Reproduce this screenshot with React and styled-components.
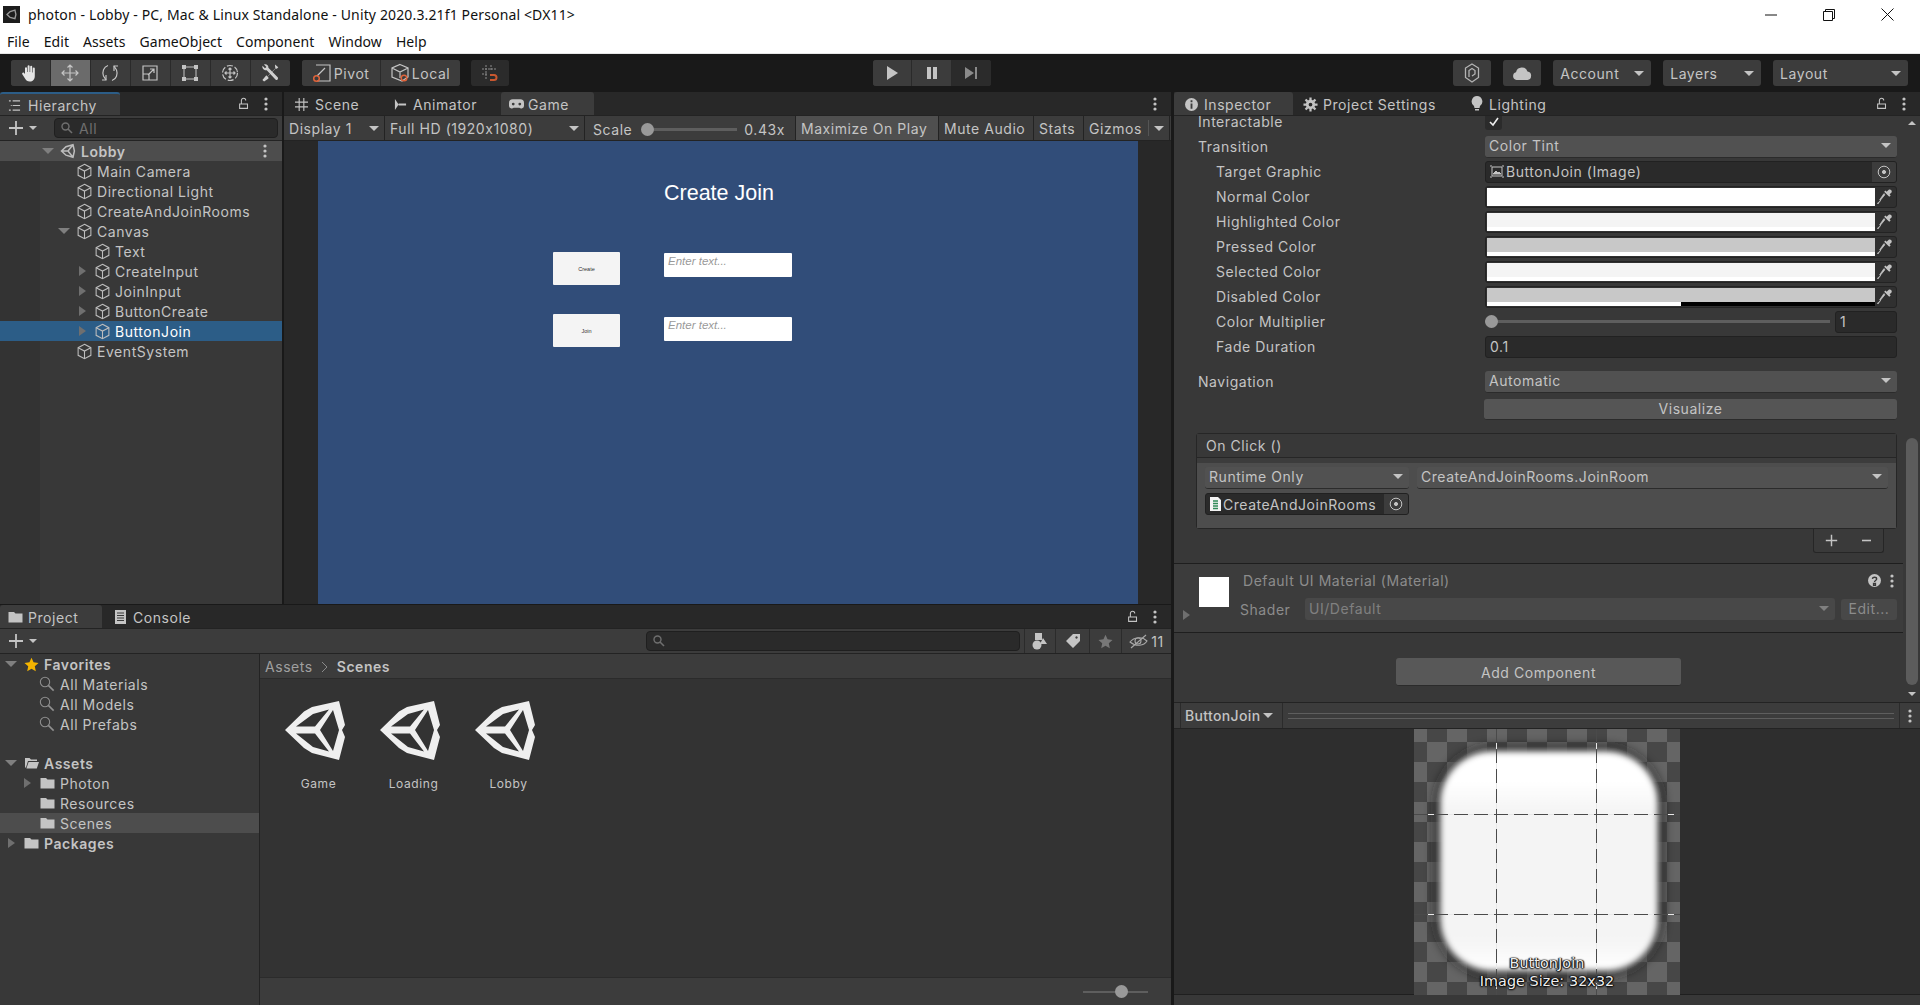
import React from 'react';
import styled, { createGlobalStyle } from 'styled-components';

const GlobalStyle = createGlobalStyle`
  html, body { margin: 0; padding: 0; background: #191919; }
  * { box-sizing: border-box; }
  #root { width: 1920px; height: 1005px; overflow: hidden; }
`;

const Page = styled.div`
  width: 1920px;
  height: 1005px;
  display: flex;
  flex-direction: column;
  overflow: hidden;
  background: #191919;
  color: #c4c4c4;
  font-family: Inter, "Noto Sans", sans-serif;
  font-size: 14px;
  letter-spacing: 0.55px;
`;

const WindowHeader = styled.header`
  height: 54px;
  flex: none;
  background: #fff;
  color: #111;
  font-family: "Noto Sans", sans-serif;
  font-size: 14px;
  letter-spacing: 0.14px;
  border-bottom: 1px solid #e6e6e6;
`;

const TitleRow = styled.div`
  height: 29px;
  display: flex;
  align-items: center;
  padding-left: 3px;
`;

const AppIcon = styled.div`
  width: 17px;
  height: 17px;
  margin-right: 8px;
  background: #1c1c1c;
  display: flex;
  align-items: center;
  justify-content: center;
`;

const WindowButtons = styled.div`
  margin-left: auto;
  display: flex;
  align-items: center;
  gap: 46px;
  padding-right: 26px;
`;

const MenuRow = styled.nav`
  height: 24px;
  display: flex;
  align-items: center;
  gap: 14px;
  padding-left: 7px;
  font-size: 14px;
  letter-spacing: 0.07px;
`;

const Toolbar = styled.div`
  height: 38px;
  flex: none;
  display: flex;
  align-items: flex-start;
  padding: 6px 12px 0 11px;
  background: #191919;
`;

const ToolGroup = styled.div`
  display: flex;
  height: 26px;
  margin-left: ${p => p.$gap || 0}px;
  border-radius: 3px;
  overflow: hidden;
  background: #3c3c3c;
  gap: 1px;
`;

const ToolButton = styled.div`
  width: ${p => p.$w || 39}px;
  height: 26px;
  display: flex;
  align-items: center;
  justify-content: center;
  gap: 2px;
  color: ${p => (p.$dim ? '#8a8a8a' : '#c4c4c4')};
  background: ${p => (p.$active ? '#6b6b6b' : p.$dim ? '#2b2b2b' : '#3c3c3c')};
  box-shadow: 1px 0 0 #2a2a2a;
`;

const ToolDrop = styled.div`
  width: ${p => p.$w}px;
  height: 26px;
  margin-left: ${p => p.$gap}px;
  display: flex;
  align-items: center;
  justify-content: space-between;
  padding: 0 7px;
  border-radius: 3px;
  background: #3c3c3c;
  color: #c4c4c4;
`;

const Workspace = styled.div`
  flex: 1;
  min-height: 0;
  display: flex;
`;

const LeftColumn = styled.div`
  width: 1171px;
  flex: none;
  display: flex;
  flex-direction: column;
  gap: 1px;
`;

const TopRow = styled.div`
  height: 512px;
  flex: none;
  display: flex;
  gap: 2px;
`;

const Panel = styled.section`
  flex: ${p => (p.$w ? 'none' : 1)};
  width: ${p => (p.$w ? `${p.$w}px` : 'auto')};
  min-width: 0;
  min-height: 0;
  display: flex;
  flex-direction: column;
  background: #383838;
`;

const TabStrip = styled.div`
  height: 24px;
  flex: none;
  display: flex;
  align-items: stretch;
  background: #282828;
  border-bottom: 1px solid #232323;
`;

const Tab = styled.div`
  width: ${p => p.$w}px;
  display: flex;
  align-items: center;
  gap: ${p => p.$iconGap || 5}px;
  padding: 1px 0 0 ${p => p.$pad || 8}px;
  background: ${p => (p.$active ? '#3c3c3c' : 'transparent')};
  border-top: ${p => (p.$focus ? '2px solid #2c5d87' : 'none')};
  border-radius: 3px 3px 0 0;
`;

const TabTools = styled.div`
  margin-left: auto;
  display: flex;
  align-items: center;
  gap: 13px;
  padding-right: 14px;
`;

const SubBar = styled.div`
  height: 25px;
  flex: none;
  display: flex;
  align-items: center;
  background: #3c3c3c;
  border-bottom: 1px solid #232323;
`;

const AddButton = styled.div`
  width: 52px;
  flex: none;
  display: flex;
  align-items: center;
  gap: 5px;
  padding-left: 8px;
`;

const SearchBox = styled.div`
  height: 20px;
  display: flex;
  align-items: center;
  gap: 6px;
  padding-left: 6px;
  width: ${p => p.$w}px;
  margin-left: ${p => p.$left || 0}px;
  border: 1px solid #1f1f1f;
  border-radius: 4px;
  background: #2a2a2a;
  color: #6f6f6f;
`;

const TreeList = styled.div`
  flex: 1;
  min-height: 0;
  background: ${p => (p.$plain ? '#383838' : 'linear-gradient(90deg, #333 40px, #383838 40px)')};
`;

const TreeRow = styled.div`
  height: 20px;
  display: flex;
  align-items: center;
  padding-left: ${p => p.$pad + 18 * p.$depth}px;
  margin-top: ${p => p.$top || 0}px;
  background: ${p => (p.$selected ? '#2c5d87' : p.$hl ? '#4d4d4d' : 'transparent')};
  color: ${p => (p.$selected ? '#fff' : '#c4c4c4')};
  font-weight: ${p => (p.$bold ? 600 : 400)};
`;

const ArrowSlot = styled.span`
  width: 18px;
  flex: none;
  display: flex;
  justify-content: center;
`;

const IconSlot = styled.span`
  width: 18px;
  flex: none;
  display: flex;
  justify-content: center;
  margin-left: 2px;
  margin-right: 4px;
  color: ${p => p.$color || '#bdbdbd'};
`;

const RowMenu = styled.span`
  margin-left: auto;
  padding-right: 15px;
  display: flex;
`;

const Caret = styled.span`
  display: inline-block;
  flex: none;
  width: 0;
  height: 0;
  ${p => {
    const size = p.$size || 5;
    const color = p.$color || '#c4c4c4';
    if (p.$right) {
      return `border-top: 5px solid transparent; border-bottom: 5px solid transparent; border-left: 7px solid ${p.$color || '#6f6f6f'};`;
    }
    const side = `border-left: ${size}px solid transparent; border-right: ${size}px solid transparent;`;
    return p.$up ? `${side} border-bottom: ${size}px solid ${color};` : `${side} border-top: ${size}px solid ${color};`;
  }}
`;

const GameBar = styled.div`
  display: flex;
  align-items: center;
  justify-content: space-between;
  flex: none;
  width: ${p => p.$w}px;
  height: 100%;
  padding: 0 5px 0 5px;
  border-right: 1px solid #232323;
  background: ${p => (p.$on ? '#4f4f4f' : 'transparent')};
`;

const CaretSplit = styled.span`
  height: 16px;
  display: flex;
  align-items: center;
  padding-left: 5px;
  border-left: 1px solid #555;
`;

const ScaleControl = styled.div`
  width: 211px;
  flex: none;
  height: 100%;
  display: flex;
  align-items: center;
  padding: 2px 0 0 8px;
  border-right: 1px solid #232323;
`;

const SliderTrack = styled.div`
  position: relative;
  height: ${p => p.$h || 3}px;
  width: ${p => p.$w}px;
  margin: 0 ${p => p.$mr || 0}px 0 ${p => p.$ml || 0}px;
  background: #5e5e5e;
  flex: none;
`;

const SliderThumb = styled.span`
  position: absolute;
  left: ${p => p.$x}px;
  top: 50%;
  width: 13px;
  height: 13px;
  margin-top: -6.5px;
  border-radius: 50%;
  background: #999;
`;

const GameView = styled.div`
  flex: 1;
  min-height: 0;
  padding: 0 33px 0 34px;
  background: #282828;
`;

const GameCanvas = styled.div`
  position: relative;
  height: 100%;
  background: #314d79;
  font-family: "Liberation Sans", sans-serif;
  letter-spacing: 0;
`;

const CanvasTitle = styled.div`
  position: absolute;
  left: 346px;
  top: 40px;
  color: #fff;
  font-size: 21.5px;
  line-height: 24px;
`;

const CanvasButton = styled.div`
  position: absolute;
  left: 235px;
  top: ${p => p.$y}px;
  width: 67px;
  height: 33px;
  display: flex;
  align-items: center;
  justify-content: center;
  border-radius: 1px;
  background: #f4f4f4;
  color: #333;
  font-size: 5.5px;
`;

const CanvasInput = styled.div`
  position: absolute;
  left: 346px;
  top: ${p => p.$y}px;
  width: 128px;
  height: 24px;
  padding: 2px 4px;
  border-radius: 1px;
  background: #fff;
  color: #9a9a9a;
  font-size: 11.5px;
  font-style: italic;
`;

const BottomBody = styled.div`
  flex: 1;
  min-height: 0;
  display: flex;
`;

const Sidebar = styled.div`
  width: 260px;
  flex: none;
  border-right: 1px solid #232323;
`;

const Browser = styled.div`
  flex: 1;
  min-width: 0;
  display: flex;
  flex-direction: column;
  background: #333;
`;

const Breadcrumb = styled.div`
  height: 25px;
  flex: none;
  display: flex;
  align-items: center;
  gap: 8px;
  padding: 1px 0 0 5px;
  background: #3c3c3c;
  border-bottom: 1px solid #2b2b2b;
`;

const Crumb = styled.span`
  color: ${p => (p.$on ? '#c4c4c4' : '#a0a0a0')};
  font-weight: ${p => (p.$on ? 600 : 400)};
`;

const AssetGrid = styled.div`
  flex: 1;
  min-height: 0;
  display: flex;
  align-items: flex-start;
  padding: 22px 0 0 7px;
`;

const AssetCard = styled.div`
  width: 95px;
  display: flex;
  flex-direction: column;
  align-items: center;
  gap: 16px;
  color: #c4c4c4;
  font-size: 12px;
  letter-spacing: 0.6px;
`;

const AssetName = styled.span`
  padding-left: 8px;
  line-height: 16px;
`;

const StatusBar = styled.div`
  height: 28px;
  flex: none;
  display: flex;
  align-items: center;
  justify-content: flex-end;
  padding-right: 23px;
  background: #3c3c3c;
  border-top: 1px solid #2b2b2b;
`;

const FilterGroup = styled.div`
  height: 100%;
  display: flex;
  margin-left: 4px;
`;

const FilterButton = styled.div`
  width: ${p => p.$w}px;
  flex: none;
  height: 100%;
  display: flex;
  align-items: center;
  justify-content: center;
  gap: 3px;
  border-left: 1px solid #2b2b2b;
`;

const Inspector = styled.aside`
  width: 746px;
  margin-left: 3px;
  flex: none;
  display: flex;
  flex-direction: column;
  background: #383838;
  border-radius: 3px 3px 0 0;
`;

const InspectorMain = styled.div`
  height: 586px;
  flex: none;
  display: flex;
`;

const InspectorScroll = styled.div`
  flex: 1;
  min-width: 0;
  overflow: hidden;
`;

const CheckRow = styled.div`
  height: 18px;
  display: flex;
  align-items: flex-start;
  line-height: 12px;
  overflow: hidden;
`;

const CheckBox = styled.span`
  width: 17px;
  height: 14px;
  display: flex;
  justify-content: center;
  border-radius: 0 0 3px 3px;
  background: #2b2b2b;
`;

const PropRow = styled.div`
  height: 25px;
  display: flex;
  align-items: center;
  margin-top: ${p => p.$top || 0}px;
`;

const PropLabel = styled.span`
  width: ${p => (p.$sub ? 269 : 287)}px;
  flex: none;
  margin-left: ${p => (p.$sub ? 42 : 24)}px;
`;

const Drop = styled.div`
  height: 22px;
  flex: ${p => (p.$w ? 'none' : 1)};
  width: ${p => (p.$w ? `${p.$w}px` : 'auto')};
  display: flex;
  align-items: center;
  justify-content: space-between;
  padding: 0 6px 2px 4px;
  border-radius: 3px;
  background: ${p => (p.$off ? '#484848' : '#515151')};
  color: ${p => (p.$off ? '#808080' : '#c4c4c4')};
  border-bottom: ${p => (p.$off ? 'none' : '1px solid #2b2b2b')};
`;

const ControlArea = styled.div`
  width: 412px;
  flex: none;
  display: flex;
  align-items: center;
  height: 22px;
  gap: 5px;
`;

const ObjectBox = styled.div`
  flex: ${p => (p.$w ? 'none' : 1)};
  width: ${p => (p.$w ? `${p.$w}px` : 'auto')};
  height: 22px;
  display: flex;
  align-items: center;
  padding-left: 4px;
  gap: 2px;
  border: 1px solid #212121;
  border-radius: 3px;
  background: #2a2a2a;
  overflow: hidden;
  white-space: nowrap;
`;

const ObjectPick = styled.span`
  width: 24px;
  height: 100%;
  margin-left: auto;
  flex: none;
  display: flex;
  align-items: center;
  justify-content: center;
  background: #3c3c3c;
`;

const SwatchFrame = styled.div`
  width: 412px;
  height: 22px;
  display: flex;
  padding: 1px;
  border: 1px solid #232323;
  border-radius: 3px;
  background: #303030;
`;

const Swatch = styled.div`
  width: 388px;
  height: 100%;
  display: flex;
  flex-direction: column;
  background: ${p => p.$color};
`;

const SwatchAlpha = styled.div`
  height: 4px;
  margin-top: auto;
  background: ${p => (p.$half ? 'linear-gradient(90deg, #fff 50%, #000 50%)' : '#fff')};
`;

const SwatchPick = styled.div`
  flex: 1;
  display: flex;
  align-items: center;
  justify-content: center;
  color: #c4c4c4;
`;

const NumberBox = styled.div`
  width: ${p => (p.$w ? `${p.$w}px` : '100%')};
  height: 22px;
  flex: none;
  display: flex;
  align-items: center;
  padding-left: 4px;
  border: 1px solid #212121;
  border-radius: 3px;
  background: #2a2a2a;
`;

const VisualizeButton = styled.div`
  width: 413px;
  height: 21px;
  margin: 5px 0 0 310px;
  display: flex;
  align-items: center;
  justify-content: center;
  padding-bottom: 2px;
  border-radius: 3px;
  background: #555;
  border-bottom: 1px solid #2b2b2b;
`;

const EventBox = styled.div`
  width: 701px;
  margin: 13px 0 0 22px;
  border: 1px solid #262626;
  border-radius: 3px;
`;

const EventHead = styled.div`
  height: 24px;
  display: flex;
  align-items: center;
  padding-left: 9px;
  background: #383838;
  border-bottom: 1px solid #262626;
`;

const EventBody = styled.div`
  height: 70px;
  padding: 9px 8px 0 8px;
  background: linear-gradient(180deg, #3c3c3c 5px, #4d4d4d 5px);
  display: flex;
  flex-direction: column;
  gap: 4px;
`;

const EventRow = styled.div`
  display: flex;
  gap: 8px;
`;

const EventFooter = styled.div`
  width: 71px;
  height: 24px;
  margin-left: 639px;
  display: flex;
  align-items: center;
  justify-content: space-around;
  border: 1px solid #262626;
  border-top: none;
  border-radius: 0 0 3px 3px;
  background: #3a3a3a;
  color: #c4c4c4;
`;

const MaterialSection = styled.div`
  height: 70px;
  margin-top: 10px;
  padding: 0 6px 0 13px;
  position: relative;
  border-top: 1px solid #1e1e1e;
  border-bottom: 1px solid #1e1e1e;
  display: flex;
  background: #3c3c3c;
`;

const MaterialThumb = styled.div`
  width: 30px;
  height: 30px;
  margin: 13px 14px 0 12px;
  flex: none;
  background: #fff;
`;

const MaterialInfo = styled.div`
  flex: 1;
  min-width: 0;
  display: flex;
  flex-direction: column;
  color: #8c8c8c;
`;

const MaterialTitle = styled.div`
  height: 33px;
  display: flex;
  align-items: center;
  padding-right: 3px;
`;

const MaterialIcons = styled.div`
  margin-left: auto;
  display: flex;
  align-items: center;
  gap: 9px;
  color: #c4c4c4;
`;

const ShaderRow = styled.div`
  display: flex;
  align-items: center;
  height: 22px;
  margin: 1px 0 0 -3px;
`;

const ShaderLabel = styled.span`
  width: 65px;
  flex: none;
`;

const EditButton = styled.div`
  width: 56px;
  height: 21px;
  margin-left: 6px;
  flex: none;
  display: flex;
  align-items: center;
  justify-content: center;
  padding-bottom: 2px;
  border-radius: 3px;
  background: #484848;
`;

const FoldArrow = styled.span`
  position: absolute;
  left: 9px;
  bottom: 9px;
`;

const AddComponent = styled.div`
  width: 285px;
  height: 28px;
  margin: 25px 0 0 222px;
  display: flex;
  align-items: center;
  justify-content: center;
  padding-top: 2px;
  border-radius: 3px;
  background: #585858;
  border-bottom: 1px solid #2b2b2b;
`;

const Scrollbar = styled.div`
  width: 17px;
  flex: none;
  display: flex;
  flex-direction: column;
  align-items: center;
  padding: 5px 0 6px;
`;

const ScrollThumb = styled.div`
  width: 12px;
  height: 247px;
  margin-top: auto;
  margin-bottom: 7px;
  border-radius: 6px;
  background: #5c5c5c;
`;

const PreviewHead = styled.div`
  height: 27px;
  flex: none;
  display: flex;
  align-items: center;
  background: #3c3c3c;
  border-top: 1px solid #232323;
  border-bottom: 1px solid #232323;
  padding-left: 6px;
`;

const PreviewPick = styled.div`
  width: 103px;
  height: 100%;
  flex: none;
  display: flex;
  align-items: center;
  gap: 3px;
  padding-left: 4px;
  font-weight: 500;
  letter-spacing: 0.35px;
  border-left: 1px solid #2b2b2b;
  border-right: 1px solid #2b2b2b;
`;

const PreviewGrip = styled.div`
  flex: 1;
  height: 6px;
  margin: 0 5px;
  border-top: 1px solid #5e5e5e;
  border-bottom: 1px solid #5e5e5e;
`;

const PreviewDots = styled.div`
  width: 21px;
  height: 100%;
  flex: none;
  display: flex;
  align-items: center;
  justify-content: center;
  border-left: 1px solid #2b2b2b;
`;

const PreviewArea = styled.div`
  height: 266px;
  flex: none;
  display: flex;
  justify-content: center;
  background: #2e2e2e;
  border-bottom: 1px solid #1f1f1f;
`;

const SpriteFrame = styled.div`
  position: relative;
  width: 266px;
  height: 266px;
`;

const SpriteCaption = styled.div`
  position: absolute;
  left: -10px;
  right: -10px;
  bottom: 5px;
  text-align: center;
  color: #eee;
  font-family: "DejaVu Sans", sans-serif;
  font-size: 14.3px;
  line-height: 18px;
  letter-spacing: 0.1px;
  text-shadow: 0 0 2px #000, 0 1px 2px #000, 1px 0 1px #000, -1px 0 1px #000;
`;

const InspectorRest = styled.div`
  flex: 1;
  background: #383838;
`;

/* ---- icons ---- */

const Ico = ({ s = 16, w, h, vb = '0 0 16 16', children }) => (
  <svg width={w || s} height={h || s} viewBox={vb} fill="none" stroke="currentColor" strokeWidth="1.2">
    {children}
  </svg>
);

const Cube = () => (
  <Ico s={17}>
    <path d="M8 1.2 14 4.4v7.2L8 14.8 2 11.6V4.4z" strokeWidth="1" />
    <path d="M2 4.4 8 7.6l6-3.2M8 7.6v7.2" strokeWidth="1" />
  </Ico>
);

const Dots = () => (
  <svg width="4" height="14" viewBox="0 0 4 14" fill="currentColor">
    <circle cx="2" cy="2" r="1.6" />
    <circle cx="2" cy="7" r="1.6" />
    <circle cx="2" cy="12" r="1.6" />
  </svg>
);

const Lock = () => (
  <Ico s={14}>
    <path d="M3 8h9v5H3zM5 8V4a2.4 2.4 0 0 1 5 0" />
  </Ico>
);

const Plus = ({ s = 16 }) => (
  <Ico s={s}>
    <path d="M8 1v14M1 8h14" strokeWidth="1.8" />
  </Ico>
);

const Lens = ({ s = 12, thin }) => (
  <Ico s={s} vb="0 0 12 12">
    <circle cx="4.5" cy="4.5" r="3.5" strokeWidth={thin ? 0.8 : 1.4} />
    <path d="M7 7l4 4" strokeWidth={thin ? 1.2 : 1.6} />
  </Ico>
);

const Folder = ({ open }) => (
  <svg width="15" height="14" viewBox="0 0 15 14" fill="#c4c4c4">
    {open
      ? <path d="M1 2h4.500l1.500 1.500h6V5H4L2 11.500H1zM4.600 6H15l-2.200 6.500H2.400z" />
      : <path d="M.5 2H6l1.500 1.500h7v9H.5z" />}
  </svg>
);

const Star = ({ color = '#f4b400', s = 15 }) => (
  <svg width={s} height={s} viewBox="0 0 16 16" fill={color}>
    <path d="m8 .8 2.200 4.900 5.300.6-4 3.600 1.100 5.300L8 12.500l-4.600 2.700 1.100-5.300-4-3.600 5.300-.6z" />
  </svg>
);

const UnityGlyph = ({ s = 16 }) => (
  <svg width={s} height={s} viewBox="0 0 16 16" fill="none" stroke="currentColor" strokeWidth="1.5">
    <path d="M1.500 8 6 3.700l7-2 1.400 6.300-1.400 6.200-7-2zM1.500 8H8l5-6.200M8 8l5 6.200" />
  </svg>
);

const UnityLogo = () => (
  <svg width="60" height="59" viewBox="0 0 60 59">
    <path
      fill="#efefef"
      fillRule="evenodd"
      d="M0 29 19 10.500 27 6 54 0l6 24-3 5 3 7-6 23-27-7-8-5zM11 25.500h19L44 8.500 28 13zM11 32.500 28 46l16 4.500-14-18zM35 29 48 50l6-21-6-20z"
    />
  </svg>
);

const Arrows = () => (
  <Ico s={20} vb="0 0 20 20">
    <path d="M10 2v16M2 10h16M7.500 4.500 10 2l2.500 2.500M7.500 15.500 10 18l2.500-2.500M4.500 7.500 2 10l2.500 2.500M15.500 7.500 18 10l-2.500 2.500" />
  </Ico>
);

const Hand = () => (
  <svg width="20" height="20" viewBox="0 0 20 20" fill="#e4e4e4">
    <path d="M5 11V5.200a1 1 0 0 1 2 0V9h.6V3.200a1 1 0 0 1 2 0V9h.6V3.800a1 1 0 0 1 2 0v5.700h.6V5.600a1 1 0 0 1 2 0V13c0 3.500-2 5.500-5 5.500-2.500 0-3.700-1-4.800-3L2.300 11.200c-.6-1.300 1-2.200 1.800-1.200z" />
  </svg>
);

const Rotate = () => (
  <Ico s={20} vb="0 0 20 20">
    <path d="M8 2.500C3.500 4 2 9 3.500 13l2.500 4M12 17.500c4.500-1.500 6-6.500 4.500-10.500L14 3" />
    <path d="M6 12v5H2M14 8V3h4" />
  </Ico>
);

const ScaleIcon = () => (
  <Ico s={18} vb="0 0 18 18">
    <path d="M2 2h14v14H2zM2 10h6v6M7 11l6-6M9 5h4v4" />
  </Ico>
);

const RectIcon = () => (
  <svg width="18" height="18" viewBox="0 0 18 18" fill="#c4c4c4">
    <path d="M3 3h12v12H3z" fill="none" stroke="#c4c4c4" strokeWidth="1" />
    <path d="M1 1h4v4H1zM13 1h4v4h-4zM1 13h4v4H1zM13 13h4v4h-4z" />
  </svg>
);

const TransformIcon = () => (
  <Ico s={20} vb="0 0 20 20">
    <circle cx="10" cy="10" r="7.500" strokeDasharray="6 2" />
    <path d="M10 5v10M5 10h10M8.500 6.500 10 5l1.500 1.500M8.500 13.500 10 15l1.500-1.500M6.500 8.500 5 10l1.500 1.500M13.500 8.500 15 10l-1.500 1.500" />
  </Ico>
);

const ToolsIcon = () => (
  <svg width="20" height="20" viewBox="0 0 20 20" fill="#d0d0d0">
    <path d="M2.500 2.800 5 5.200l1.400-1.300L4 1.500C6.200.6 8.600 2.200 8.400 4.800l9 9.200c.8.800.8 1.700.2 2.400-.7.700-1.700.7-2.400-.1L6.700 7.300c-2.600.3-5-1.900-4.200-4.500z" />
    <path d="m15 1.500 3.300 2.700-1.500 1.600-1.200-.3-8 8.200 1.200 1.200-1 1-3.700 2.600-1.700-1.600 2.900-3.500 1-1.100 1.100 1.200 8-8.200-.3-1.200z" />
  </svg>
);

const PivotIcon = () => (
  <svg width="20" height="20" viewBox="0 0 20 20" fill="none" stroke="#c4c4c4" strokeWidth="1.200">
    <path d="M4 2h14v16H5M5 13 13 5" />
    <circle cx="4.500" cy="15.500" r="2.800" stroke="#e0633a" strokeWidth="1.500" />
  </svg>
);

const LocalIcon = () => (
  <svg width="20" height="20" viewBox="0 0 20 20" fill="none" stroke="#c4c4c4" strokeWidth="1.200">
    <path d="M10 1.500 18 5v9l-6 4-10-4V5zM2 5l8 4 8-4M10 9v6" />
    <circle cx="14" cy="15" r="2.800" stroke="#e0633a" strokeWidth="1.500" />
  </svg>
);

const SnapIcon = () => (
  <svg width="20" height="20" viewBox="0 0 20 20" fill="none" stroke="#8c8c8c" strokeWidth="1">
    <path d="M6 2v14M11 2v6M2 6h14M2 11h6" strokeDasharray="2 1" />
    <path d="M10 12h4a2.500 2.500 0 0 1 0 5h-4" stroke="#c8572f" strokeWidth="2" />
  </svg>
);

const PlayTri = () => (
  <svg width="12" height="14" viewBox="0 0 12 14" fill="#c4c4c4"><path d="M1 0v14l11-7z" /></svg>
);

const PauseBars = () => (
  <svg width="12" height="14" viewBox="0 0 12 14" fill="#c4c4c4"><path d="M1 1h4v12H1zM7 1h4v12H7z" /></svg>
);

const StepIcon = () => (
  <svg width="13" height="14" viewBox="0 0 13 14" fill="#8a8a8a"><path d="M0 1v12l9-6zM10 1h2v12h-2z" /></svg>
);

const CollabIcon = () => (
  <svg width="16" height="20" viewBox="0 0 16 20" fill="none" stroke="#b4b4b4" strokeWidth="1.300">
    <path d="M8 1 14.500 5v9.500L8 19 1.500 14.500V5z" />
    <path d="M5 14V7.500l3-2 3 2V11L8 13" />
  </svg>
);

const CloudIcon = () => (
  <svg width="20" height="15" viewBox="0 0 20 15" fill="#c4c4c4">
    <path d="M4.500 14A4 4 0 0 1 4 6.200 6 6 0 0 1 15.500 5.500 4.300 4.300 0 0 1 15.500 14z" />
  </svg>
);

const ListIcon = () => (
  <Ico s={13} vb="0 0 14 14">
    <path d="M1 2h2M5 2h8M3 7h1M5 7h8M1 12h2M5 12h8" />
  </Ico>
);

const GridIcon = () => (
  <Ico s={13} vb="0 0 14 14">
    <path d="M4.500 0v14M9.500 0v14M0 4.500h14M0 9.500h14" />
  </Ico>
);

const AnimatorIcon = () => (
  <svg width="13" height="13" viewBox="0 0 14 14" fill="#c4c4c4">
    <path d="M1 1l4 6-4 6zM5 6h8v2H5z" />
  </svg>
);

const GamepadIcon = () => (
  <svg width="15" height="11" viewBox="0 0 16 11" fill="#c4c4c4">
    <path d="M4 0h8a4 4 0 0 1 4 4v3a3 3 0 0 1-5 2H5a3 3 0 0 1-5-2V4a4 4 0 0 1 4-4z" />
    <circle cx="4.500" cy="5" r="1.500" fill="#3c3c3c" />
    <circle cx="11.500" cy="5" r="1.500" fill="#3c3c3c" />
  </svg>
);

const InfoIcon = () => (
  <svg width="13" height="13" viewBox="0 0 14 14">
    <circle cx="7" cy="7" r="7" fill="#c4c4c4" />
    <path d="M6 6h2v5.500H6zM6 2.500h2v2H6z" fill="#3c3c3c" />
  </svg>
);

const GearIcon = () => (
  <svg width="15" height="15" viewBox="0 0 16 16" fill="none" stroke="#c4c4c4">
    <circle cx="8" cy="8" r="3.500" strokeWidth="3" />
    <path d="M8 .5v3M8 12.500v3M.5 8h3M12.500 8h3M2.700 2.700l2 2M11.300 11.300l2 2M13.300 2.700l-2 2M4.700 11.300l-2 2" strokeWidth="2.400" />
  </svg>
);

const BulbIcon = () => (
  <svg width="12" height="16" viewBox="0 0 12 16" fill="#c4c4c4">
    <path d="M6 0a5.500 5.500 0 0 1 3 10l-.5 2h-5L3 10A5.500 5.500 0 0 1 6 0zM4 13h4v1.500H4z" />
  </svg>
);

const DocIcon = () => (
  <svg width="13" height="14" viewBox="0 0 13 14" fill="#c4c4c4">
    <path d="M1 0h11v14H1z" />
    <path d="M3 3h7M3 5.500h7M3 8h7M3 10.500h7" stroke="#383838" />
  </svg>
);

const Target = () => (
  <svg width="14" height="14" viewBox="0 0 14 14" fill="none" stroke="#c4c4c4">
    <circle cx="7" cy="7" r="5.800" />
    <circle cx="7" cy="7" r="1.600" fill="#c4c4c4" />
  </svg>
);

const ImageGlyph = () => (
  <svg width="14" height="13" viewBox="0 0 14 13" fill="none" stroke="#c4c4c4">
    <path d="M2 2h10v9H2zM0 1h2M12 1h2M0 12h2M12 12h2" />
    <path d="M3 9l3-3 2 2 1-1 2 2z" fill="#c4c4c4" />
  </svg>
);

const ScriptGlyph = () => (
  <svg width="11" height="14" viewBox="0 0 11 14">
    <path d="M0 0h8l3 3v11H0z" fill="#f4f4f4" />
    <path d="M3 4h5M3 6.500h5M3 9h5M3 11.500h5" stroke="#2f8a57" strokeWidth="1.500" />
  </svg>
);

const Dropper = () => (
  <svg width="16" height="16" viewBox="0 0 15 15" fill="#c4c4c4">
    <path d="M9 2.500 11 .8c.8-.6 1.800-.4 2.400.3.600.7.600 1.700 0 2.300L11.800 5l1 1-1.300 1.300-4.800-4.800L8 1.500z" />
    <path d="m6.500 4.300 1 1L3 10.800l-2 3.300-.7-.7L3.500 11l-1-.9z" stroke="#c4c4c4" strokeWidth=".6" />
  </svg>
);

const FilterShapes = () => (
  <svg width="16" height="17" viewBox="0 0 16 17" fill="#c4c4c4">
    <path d="M3 0h7v7H3zM11 5l4 6H8z" />
    <circle cx="5" cy="12" r="4.500" />
  </svg>
);

const TagIcon = () => (
  <svg width="14" height="14" viewBox="0 0 14 14" fill="#c4c4c4">
    <path fillRule="evenodd" d="M7 0h7v7l-7 7-7-7zM10.500 2.300a1.200 1.200 0 1 0 .01 0z" />
  </svg>
);

const EyeOff = () => (
  <svg width="19" height="15" viewBox="0 0 19 15" fill="none" stroke="#a8a8a8" strokeWidth="1.100">
    <path d="M1 8c4-5 12-6 17-1-3 5-11 6-17 1z" />
    <circle cx="9" cy="7" r="3" />
    <path d="M2 14 17 1" />
  </svg>
);

const WinMin = () => (
  <svg width="12" height="12" viewBox="0 0 12 12" stroke="#111"><path d="M0 6h12" /></svg>
);

const WinMax = () => (
  <svg width="12" height="12" viewBox="0 0 12 12" fill="none" stroke="#111"><path d="M.5 2.500h9v9h-9zM2.500 2.500V.5h9v9h-2" /></svg>
);

const WinClose = () => (
  <svg width="13" height="13" viewBox="0 0 13 13" stroke="#111"><path d="M.5.5l12 12M12.500.5l-12 12" /></svg>
);

const SpritePreview = () => (
  <svg width="266" height="266" viewBox="0 0 266 266">
    <defs>
      <pattern id="checks" x="-7" y="-7" width="40" height="40" patternUnits="userSpaceOnUse">
        <rect width="40" height="40" fill="#474747" />
        <rect width="20" height="20" fill="#656565" />
        <rect x="20" y="20" width="20" height="20" fill="#656565" />
      </pattern>
      <filter id="soft" x="-20%" y="-20%" width="140%" height="140%">
        <feGaussianBlur stdDeviation="3" />
      </filter>
      <filter id="halo" x="-20%" y="-20%" width="140%" height="140%">
        <feGaussianBlur stdDeviation="6" />
      </filter>
      <linearGradient id="gloss" x1="0" y1="0" x2="0" y2="1">
        <stop offset="0" stopColor="#fff" />
        <stop offset="0.14" stopColor="#fff" />
        <stop offset="0.28" stopColor="#f4f4f4" />
        <stop offset="0.85" stopColor="#f4f4f4" />
        <stop offset="1" stopColor="#fff" />
      </linearGradient>
    </defs>
    <rect width="266" height="266" fill="url(#checks)" />
    <rect x="22" y="18" width="226" height="228" rx="58" fill="#1c1c1c" filter="url(#halo)" />
    <rect x="26" y="22" width="218" height="220" rx="52" fill="url(#gloss)" filter="url(#soft)" />
    <g fill="none" strokeWidth="1">
      <path d="M82.500 0v266M182.500 0v266M0 85.500h266M0 185.500h266" stroke="#e8e8e8" />
      <path d="M82.500 0v266M182.500 0v266M0 85.500h266M0 185.500h266" stroke="#4a4a4a" strokeDasharray="14 6" />
    </g>
  </svg>
);

/* ---- data ---- */

const hierarchy = [
  { name: 'Main Camera', depth: 1 },
  { name: 'Directional Light', depth: 1 },
  { name: 'CreateAndJoinRooms', depth: 1 },
  { name: 'Canvas', depth: 1, open: true },
  { name: 'Text', depth: 2 },
  { name: 'CreateInput', depth: 2, closed: true },
  { name: 'JoinInput', depth: 2, closed: true },
  { name: 'ButtonCreate', depth: 2, closed: true },
  { name: 'ButtonJoin', depth: 2, closed: true, selected: true },
  { name: 'EventSystem', depth: 1 },
];

const swatches = [
  { label: 'Normal Color', color: '#ffffff' },
  { label: 'Highlighted Color', color: '#f4f4f4' },
  { label: 'Pressed Color', color: '#c8c8c8' },
  { label: 'Selected Color', color: '#f4f4f4' },
  { label: 'Disabled Color', color: '#c8c8c8', half: true },
];

const tools = [Hand, Arrows, Rotate, ScaleIcon, RectIcon, TransformIcon, ToolsIcon];
const menus = ['File', 'Edit', 'Assets', 'GameObject', 'Component', 'Window', 'Help'];
const assets = ['Game', 'Loading', 'Lobby'];

function App() {
  return (
    <Page>
      <GlobalStyle />
      <WindowHeader>
        <TitleRow>
          <AppIcon>
            <svg width="11" height="11" viewBox="0 0 16 16" fill="none" stroke="#999" strokeWidth="2">
              <path d="M1.500 8 6 3.700l7-2 1.400 6.300-1.400 6.200-7-2z" />
            </svg>
          </AppIcon>
          photon - Lobby - PC, Mac &amp; Linux Standalone - Unity 2020.3.21f1 Personal &lt;DX11&gt;
          <WindowButtons>
            <WinMin />
            <WinMax />
            <WinClose />
          </WindowButtons>
        </TitleRow>
        <MenuRow>
          {menus.map(m => <span key={m}>{m}</span>)}
        </MenuRow>
      </WindowHeader>

      <Toolbar>
        <ToolGroup>
          {tools.map((Icon, i) => (
            <ToolButton key={i} $active={i === 1}><Icon /></ToolButton>
          ))}
        </ToolGroup>
        <ToolGroup $gap={12}>
          <ToolButton $w={78}><PivotIcon />Pivot</ToolButton>
          <ToolButton $w={79}><LocalIcon />Local</ToolButton>
        </ToolGroup>
        <ToolGroup $gap={11}>
          <ToolButton $dim $w={39}><SnapIcon /></ToolButton>
        </ToolGroup>
        <ToolGroup $gap={364}>
          <ToolButton $w={38}><PlayTri /></ToolButton>
          <ToolButton $w={39}><PauseBars /></ToolButton>
          <ToolButton $w={39} $dim><StepIcon /></ToolButton>
        </ToolGroup>
        <ToolGroup $gap={462}>
          <ToolButton $w={38}><CollabIcon /></ToolButton>
        </ToolGroup>
        <ToolGroup $gap={12}>
          <ToolButton $w={38}><CloudIcon /></ToolButton>
        </ToolGroup>
        <ToolDrop $w={98} $gap={12}>Account <Caret $size={5} /></ToolDrop>
        <ToolDrop $w={98} $gap={12}>Layers <Caret $size={5} /></ToolDrop>
        <ToolDrop $w={135} $gap={12}>Layout <Caret $size={5} /></ToolDrop>
      </Toolbar>

      <Workspace>
        <LeftColumn>
          <TopRow>
            <Panel $w={282}>
              <TabStrip>
                <Tab $w={120} $active $focus $iconGap={7}>
                  <ListIcon />Hierarchy
                </Tab>
                <TabTools>
                  <Lock />
                  <Dots />
                </TabTools>
              </TabStrip>
              <SubBar>
                <AddButton><Plus /><Caret $size={4} /></AddButton>
                <SearchBox $w={224} $left={2}><Lens />All</SearchBox>
              </SubBar>
              <TreeList>
                <TreeRow $pad={39} $depth={0} $hl $bold>
                  <ArrowSlot><Caret $size={6} $color="#7f7f7f" /></ArrowSlot>
                  <IconSlot><UnityGlyph /></IconSlot>
                  Lobby
                  <RowMenu><Dots /></RowMenu>
                </TreeRow>
                {hierarchy.map(row => (
                  <TreeRow key={row.name} $pad={37} $depth={row.depth} $selected={row.selected}>
                    <ArrowSlot>
                      {row.open && <Caret $size={6} $color="#7f7f7f" />}
                      {row.closed && <Caret $right />}
                    </ArrowSlot>
                    <IconSlot><Cube /></IconSlot>
                    {row.name}
                  </TreeRow>
                ))}
              </TreeList>
            </Panel>

            <Panel>
              <TabStrip>
                <Tab $w={108} $pad={11} $iconGap={7}><GridIcon />Scene</Tab>
                <Tab $w={109} $pad={2} $iconGap={6}><AnimatorIcon />Animator</Tab>
                <Tab $w={93} $active $pad={8} $iconGap={4}><GamepadIcon />Game</Tab>
                <TabTools><Dots /></TabTools>
              </TabStrip>
              <SubBar>
                <GameBar $w={101}>Display 1 <Caret /></GameBar>
                <GameBar $w={200}>Full HD (1920x1080) <Caret /></GameBar>
                <ScaleControl>
                  Scale
                  <SliderTrack $w={95} $ml={10} $mr={7}><SliderThumb $x={-1} /></SliderTrack>
                  0.43x
                </ScaleControl>
                <GameBar $w={143} $on>Maximize On Play</GameBar>
                <GameBar $w={95}>Mute Audio</GameBar>
                <GameBar $w={50}>Stats</GameBar>
                <GameBar $w={86}>Gizmos <CaretSplit><Caret /></CaretSplit></GameBar>
              </SubBar>
              <GameView>
                <GameCanvas>
                  <CanvasTitle>Create Join</CanvasTitle>
                  <CanvasButton $y={111}>Create</CanvasButton>
                  <CanvasInput $y={112}>Enter text...</CanvasInput>
                  <CanvasButton $y={173}>Join</CanvasButton>
                  <CanvasInput $y={176}>Enter text...</CanvasInput>
                </GameCanvas>
              </GameView>
            </Panel>
          </TopRow>

          <Panel>
            <TabStrip>
              <Tab $w={102} $active $iconGap={5}><Folder />Project</Tab>
              <Tab $w={90} $pad={12} $iconGap={6}><DocIcon />Console</Tab>
              <TabTools><Lock /><Dots /></TabTools>
            </TabStrip>
            <SubBar>
              <AddButton><Plus /><Caret $size={4} /></AddButton>
              <SearchBox $w={375} $left={594}><Lens /></SearchBox>
              <FilterGroup>
                <FilterButton $w={31}><FilterShapes /></FilterButton>
                <FilterButton $w={34}><TagIcon /></FilterButton>
                <FilterButton $w={32}><Star color="#777" /></FilterButton>
                <FilterButton $w={50}><EyeOff />11</FilterButton>
              </FilterGroup>
            </SubBar>
            <BottomBody>
              <Sidebar>
                <TreeList $plain>
                  <TreeRow $pad={2} $depth={0} $bold>
                    <ArrowSlot><Caret $size={6} $color="#7f7f7f" /></ArrowSlot>
                    <IconSlot><Star /></IconSlot>Favorites
                  </TreeRow>
                  {['All Materials', 'All Models', 'All Prefabs'].map(n => (
                    <TreeRow key={n} $pad={0} $depth={1}>
                      <ArrowSlot />
                      <IconSlot $color="#8f8f8f"><Lens s={16} thin /></IconSlot>{n}
                    </TreeRow>
                  ))}
                  <TreeRow $pad={2} $depth={0} $bold $top={19}>
                    <ArrowSlot><Caret $size={6} $color="#7f7f7f" /></ArrowSlot>
                    <IconSlot><Folder open /></IconSlot>Assets
                  </TreeRow>
                  <TreeRow $pad={0} $depth={1}>
                    <ArrowSlot><Caret $right /></ArrowSlot>
                    <IconSlot><Folder /></IconSlot>Photon
                  </TreeRow>
                  <TreeRow $pad={0} $depth={1}>
                    <ArrowSlot />
                    <IconSlot><Folder /></IconSlot>Resources
                  </TreeRow>
                  <TreeRow $pad={0} $depth={1} $hl>
                    <ArrowSlot />
                    <IconSlot><Folder /></IconSlot>Scenes
                  </TreeRow>
                  <TreeRow $pad={2} $depth={0} $bold>
                    <ArrowSlot><Caret $right /></ArrowSlot>
                    <IconSlot><Folder /></IconSlot>Packages
                  </TreeRow>
                </TreeList>
              </Sidebar>
              <Browser>
                <Breadcrumb>
                  <Crumb>Assets</Crumb>
                  <svg width="8" height="12" viewBox="0 0 8 12" fill="none" stroke="#8a8a8a"><path d="m1 1 5 5-5 5" /></svg>
                  <Crumb $on>Scenes</Crumb>
                </Breadcrumb>
                <AssetGrid>
                  {assets.map(a => (
                    <AssetCard key={a}>
                      <UnityLogo />
                      <AssetName>{a}</AssetName>
                    </AssetCard>
                  ))}
                </AssetGrid>
                <StatusBar>
                  <SliderTrack $w={65} $h={2}><SliderThumb $x={32} /></SliderTrack>
                </StatusBar>
              </Browser>
            </BottomBody>
          </Panel>
        </LeftColumn>

        <Inspector>
          <TabStrip>
            <Tab $w={119} $active $pad={11} $iconGap={6}><InfoIcon />Inspector</Tab>
            <Tab $w={176} $pad={10} $iconGap={5}><GearIcon />Project Settings</Tab>
            <Tab $w={110} $pad={2} $iconGap={6}><BulbIcon />Lighting</Tab>
            <TabTools><Lock /><Dots /></TabTools>
          </TabStrip>
          <InspectorMain>
            <InspectorScroll>
              <CheckRow>
                <PropLabel>Interactable</PropLabel>
                <CheckBox>
                  <svg width="12" height="12" viewBox="0 0 12 12" fill="none" stroke="#eee" strokeWidth="1.600"><path d="m2 6 3 3 5-7" /></svg>
                </CheckBox>
              </CheckRow>
              <PropRow>
                <PropLabel>Transition</PropLabel>
                <ControlArea><Drop>Color Tint <Caret /></Drop></ControlArea>
              </PropRow>
              <PropRow>
                <PropLabel $sub>Target Graphic</PropLabel>
                <ControlArea>
                  <ObjectBox><ImageGlyph />ButtonJoin (Image)<ObjectPick><Target /></ObjectPick></ObjectBox>
                </ControlArea>
              </PropRow>
              {swatches.map(s => (
                <PropRow key={s.label}>
                  <PropLabel $sub>{s.label}</PropLabel>
                  <SwatchFrame>
                    <Swatch $color={s.color}><SwatchAlpha $half={s.half} /></Swatch>
                    <SwatchPick><Dropper /></SwatchPick>
                  </SwatchFrame>
                </PropRow>
              ))}
              <PropRow>
                <PropLabel $sub>Color Multiplier</PropLabel>
                <ControlArea>
                  <SliderTrack $w={345}><SliderThumb $x={0} /></SliderTrack>
                  <NumberBox $w={62}>1</NumberBox>
                </ControlArea>
              </PropRow>
              <PropRow>
                <PropLabel $sub>Fade Duration</PropLabel>
                <ControlArea><NumberBox>0.1</NumberBox></ControlArea>
              </PropRow>
              <PropRow $top={10}>
                <PropLabel>Navigation</PropLabel>
                <ControlArea><Drop>Automatic <Caret /></Drop></ControlArea>
              </PropRow>
              <VisualizeButton>Visualize</VisualizeButton>
              <EventBox>
                <EventHead>On Click ()</EventHead>
                <EventBody>
                  <EventRow>
                    <Drop $w={204}>Runtime Only <Caret /></Drop>
                    <Drop>CreateAndJoinRooms.JoinRoom <Caret /></Drop>
                  </EventRow>
                  <ObjectBox $w={204}>
                    <ScriptGlyph />CreateAndJoinRooms<ObjectPick><Target /></ObjectPick>
                  </ObjectBox>
                </EventBody>
              </EventBox>
              <EventFooter>
                <Plus s={13} />
                <svg width="11" height="13" viewBox="0 0 11 13" stroke="#c4c4c4" strokeWidth="1.600"><path d="M1 6.500h9" /></svg>
              </EventFooter>
              <MaterialSection>
                <MaterialThumb />
                <MaterialInfo>
                  <MaterialTitle>
                    Default UI Material (Material)
                    <MaterialIcons>
                      <svg width="13" height="13" viewBox="0 0 14 14">
                        <circle cx="7" cy="7" r="7" fill="#c4c4c4" />
                        <path d="M4.700 5.200C5 3 9.300 3 9.300 5.300 9.300 7 7 7 7 8.700M6 10.300h2v2H6z" fill="none" stroke="#383838" strokeWidth="1.500" />
                      </svg>
                      <Dots />
                    </MaterialIcons>
                  </MaterialTitle>
                  <ShaderRow>
                    <ShaderLabel>Shader</ShaderLabel>
                    <Drop $off>UI/Default <Caret $color="#808080" /></Drop>
                    <EditButton>Edit...</EditButton>
                  </ShaderRow>
                </MaterialInfo>
                <FoldArrow><Caret $right /></FoldArrow>
              </MaterialSection>
              <AddComponent>Add Component</AddComponent>
            </InspectorScroll>
            <Scrollbar>
              <Caret $up $size={4} />
              <ScrollThumb />
              <Caret $size={4} />
            </Scrollbar>
          </InspectorMain>
          <PreviewHead>
            <PreviewPick>ButtonJoin <Caret $size={5} /></PreviewPick>
            <PreviewGrip />
            <PreviewDots><Dots /></PreviewDots>
          </PreviewHead>
          <PreviewArea>
            <SpriteFrame>
              <SpritePreview />
              <SpriteCaption>ButtonJoin<br />Image Size: 32x32</SpriteCaption>
            </SpriteFrame>
          </PreviewArea>
          <InspectorRest />
        </Inspector>
      </Workspace>
    </Page>
  );
}

export default App;
